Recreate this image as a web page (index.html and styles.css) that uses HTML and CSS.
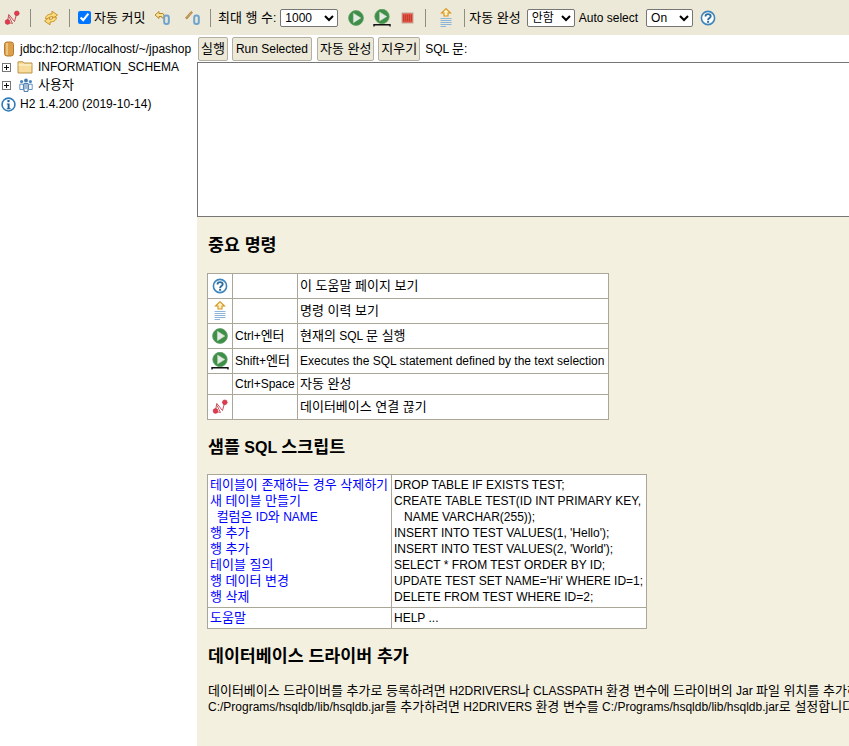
FILE: index.html
```html
<!DOCTYPE html>
<html lang="ko">
<head>
<meta charset="utf-8">
<title>H2 Console</title>
<link rel="stylesheet" href="styles.css">
</head>
<body>
<svg class="defs" width="0" height="0">
  <defs>
    <symbol id="i-disc" viewBox="0 0 16 16">
      <path d="M3.5 11.5 L4.8 4.5 L10.5 11.5 L12.7 3.5" fill="none" stroke="#c23a4a" stroke-width=".9"/>
      <path d="M4 12.5 L8.5 13.5 L5 6.5" fill="none" stroke="#c23a4a" stroke-width=".8"/>
      <circle cx="3.5" cy="12" r="2.4" fill="#e5384c" stroke="#b02a3a" stroke-width=".5"/>
      <circle cx="12.8" cy="3.3" r="2.4" fill="#e5384c" stroke="#b02a3a" stroke-width=".5"/>
    </symbol>
    <symbol id="i-refresh" viewBox="0 0 16 16">
      <path d="M2.5 8.5 C3 5 6 4 9 4 L9 1.2 L14.5 5 L9.5 8.8 L9.5 6.5 C7.5 6.5 6 7.5 5.5 9Z" fill="#fbdc7c" stroke="#c48a20" stroke-width=".9"/>
      <path d="M13.5 7.5 C13 11 10 12 7 12 L7 14.8 L1.5 11 L6.5 7.2 L6.5 9.5 C8.5 9.5 10 8.5 10.5 7Z" fill="#fbdc7c" stroke="#c48a20" stroke-width=".9"/>
    </symbol>
    <symbol id="i-undo" viewBox="0 0 16 16">
      <path d="M1 5 L5 1.5 L5 3.5 L9 3.5 L10 5 L10 8 L8 8 L7.5 6.5 L5 6.5 L5 8.5Z" fill="#f8e29a" stroke="#b8862a" stroke-width="1"/>
      <rect x="10.2" y="5.5" width="4.6" height="8.5" rx="2" fill="none" stroke="#6fa3cf" stroke-width="2"/>
    </symbol>
    <symbol id="i-commit" viewBox="0 0 16 16">
      <path d="M1.5 8 L7 1.5 L8.5 2.5 L3 9Z" fill="#c9a060" stroke="#a87a38" stroke-width=".7"/>
      <rect x="10.2" y="5.5" width="4.6" height="8.5" rx="2" fill="none" stroke="#6fa3cf" stroke-width="2"/>
    </symbol>
    <symbol id="i-play" viewBox="0 0 16 16">
      <circle cx="8" cy="8" r="7.4" fill="#3f8f48" stroke="#5c9e62" stroke-width=".8"/>
      <path d="M5.4 3.2 L12.9 8 L5.4 12.8Z" fill="#e6ece2" stroke="#c9d8c6" stroke-width=".5"/>
    </symbol>
    <symbol id="i-playsel" viewBox="0 0 18 18">
      <circle cx="9" cy="7.5" r="7.2" fill="#3f8f48" stroke="#5c9e62" stroke-width=".8"/>
      <path d="M6.6 3 L13.8 7.5 L6.6 12Z" fill="#e6ece2" stroke="#c9d8c6" stroke-width=".5"/>
      <path d="M1 17.5 L1 15.8 L17 15.8 L17 17.5" fill="none" stroke="#111" stroke-width="1.4"/>
    </symbol>
    <symbol id="i-stop" viewBox="0 0 16 16">
      <rect x="2" y="3" width="11" height="10" fill="#e2503f" stroke="#c2ab9c" stroke-width="1"/>
      <path d="M3 6 H12 M3 8 H12 M3 10 H12" stroke="#a82a20" stroke-width="1.2" stroke-dasharray="1 1"/>
    </symbol>
    <symbol id="i-history" viewBox="0 0 16 20">
      <path d="M8 0.7 L12.5 5 L10 5 L10 8 L6 8 L6 5 L3.5 5Z" fill="#fdf2c6" stroke="#d8921c" stroke-width="1.1"/>
      <path d="M2.5 10.5 H13.5 M2.5 12.5 H13.5 M2.5 14.5 H13.5 M2.5 16.5 H13.5 M2.5 18.5 H8" stroke="#8cb4d8" stroke-width="1"/>
    </symbol>
    <symbol id="i-help" viewBox="0 0 16 16">
      <circle cx="8" cy="8" r="6.6" fill="#fff" stroke="#3d85bb" stroke-width="1.6"/>
      <path d="M5.5 6.4 C5.5 3.4 10.7 3.4 10.7 6.2 C10.7 8 8.1 8 8.1 10" fill="none" stroke="#2c6ea0" stroke-width="1.9"/>
      <rect x="7.1" y="10.8" width="2" height="2" fill="#2c6ea0"/>
    </symbol>
    <symbol id="i-db" viewBox="0 0 12 16">
      <rect x="1.5" y="1" width="9" height="14" rx="2.5" fill="#dca04a" stroke="#b87a2c" stroke-width="1"/>
      <path d="M4 2 V14" stroke="#f3cf94" stroke-width="1.5"/>
    </symbol>
    <symbol id="i-plus" viewBox="0 0 9 9">
      <rect x=".5" y=".5" width="8" height="8" fill="#fff" stroke="#777"/>
      <path d="M2 4.5 H7 M4.5 2 V7" stroke="#111"/>
    </symbol>
    <symbol id="i-folder" viewBox="0 0 16 14">
      <path d="M1 3 L1 1.8 L6 1.8 L7 3 L15 3 L15 13 L1 13Z" fill="#f7dc9c" stroke="#bb9448" stroke-width="1"/>
      <path d="M1.6 5 H14.4" stroke="#fdf0c8" stroke-width="1.4"/>
    </symbol>
    <symbol id="i-users" viewBox="0 0 14 14">
      <circle cx="2.6" cy="3.6" r="1.6" fill="#4c86bd"/>
      <path d="M.8 6.2 H4.4 V11.5 H.8Z" fill="#fff" stroke="#3f78b0" stroke-width=".8"/>
      <circle cx="11.4" cy="3.6" r="1.6" fill="#4c86bd"/>
      <path d="M9.6 6.2 H13.2 V11.5 H9.6Z" fill="#fff" stroke="#3f78b0" stroke-width=".8"/>
      <circle cx="7" cy="2.4" r="1.9" fill="#3f78b0"/>
      <path d="M5 5.4 H9 V13.4 H5Z" fill="#fff" stroke="#2f68a0" stroke-width=".9"/>
      <path d="M7 5.6 V11" stroke="#3f78b0" stroke-width="1"/>
    </symbol>
    <symbol id="i-info" viewBox="0 0 14 14">
      <circle cx="7" cy="7" r="6" fill="#fff" stroke="#2f7ab8" stroke-width="1.5"/>
      <rect x="6" y="2.8" width="2" height="2" fill="#1f5f98"/>
      <path d="M5.4 6 H8 V10.4 H9 V11.4 H5.4 V10.4 H6.2 V7 H5.4Z" fill="#1f5f98"/>
    </symbol>
  </defs>
</svg>

<header class="toolbar">
  <svg class="ic16"><use href="#i-disc"/></svg>
  <span class="sep"></span>
  <svg class="ic16"><use href="#i-refresh"/></svg>
  <span class="sep"></span>
  <label class="check"><input type="checkbox" checked><span class="ko">자동 커밋</span></label>
  <svg class="ic16 undo"><use href="#i-undo"/></svg>
  <svg class="ic16"><use href="#i-commit"/></svg>
  <span class="sep"></span>
  <span class="tlabel"><span class="ko">최대 행 수</span>:</span>
  <select class="sel sel-rows"><option>1000</option></select>
  <svg class="ic16"><use href="#i-play"/></svg>
  <svg class="ic18"><use href="#i-playsel"/></svg>
  <svg class="ic16 stop"><use href="#i-stop"/></svg>
  <span class="sep"></span>
  <svg class="ic-hist"><use href="#i-history"/></svg>
  <span class="sep"></span>
  <span class="tlabel tlabel-auto"><span class="ko">자동 완성</span></span>
  <select class="sel sel-auto"><option>안함</option></select>
  <span class="tlabel tlabel-sel">Auto select</span>
  <select class="sel sel-on"><option>On</option></select>
  <svg class="ic16"><use href="#i-help"/></svg>
</header>

<div class="body-row">
  <nav class="tree">
    <div class="node node-db"><svg class="ic-db"><use href="#i-db"/></svg><span>jdbc:h2:tcp://localhost/~/jpashop</span></div>
    <div class="node node-folder"><svg class="ic-plus"><use href="#i-plus"/></svg><svg class="ic-folder"><use href="#i-folder"/></svg><span>INFORMATION_SCHEMA</span></div>
    <div class="node node-users"><svg class="ic-plus"><use href="#i-plus"/></svg><svg class="ic-users"><use href="#i-users"/></svg><span class="ko">사용자</span></div>
    <div class="node node-info"><svg class="ic-info"><use href="#i-info"/></svg><span>H2 1.4.200 (2019-10-14)</span></div>
  </nav>

  <main class="main">
    <div class="actions">
      <button class="btn"><span class="ko">실행</span></button>
      <button class="btn btn-wide">Run Selected</button>
      <button class="btn"><span class="ko">자동 완성</span></button>
      <button class="btn"><span class="ko">지우기</span></button>
      <span class="sql-label">SQL <span class="ko">문</span>:</span>
    </div>
    <textarea class="sql"></textarea>

    <section class="help">
      <h3 class="h-first"><span class="ko">중요 명령</span></h3>
      <table class="grid cmds">
        <tr class="r25"><td class="c-ic"><svg class="ic16"><use href="#i-help"/></svg></td><td class="c-key"></td><td><span class="ko">이 도움말 페이지 보기</span></td></tr>
        <tr class="r25"><td class="c-ic"><svg class="ic-hist"><use href="#i-history"/></svg></td><td class="c-key"></td><td><span class="ko">명령 이력 보기</span></td></tr>
        <tr class="r25"><td class="c-ic"><svg class="ic16"><use href="#i-play"/></svg></td><td class="c-key">Ctrl+<span class="ko">엔터</span></td><td><span class="ko">현재의</span> SQL <span class="ko">문 실행</span></td></tr>
        <tr class="r25"><td class="c-ic"><svg class="ic18"><use href="#i-playsel"/></svg></td><td class="c-key">Shift+<span class="ko">엔터</span></td><td>Executes the SQL statement defined by the text selection</td></tr>
        <tr class="r21"><td class="c-ic"></td><td class="c-key">Ctrl+Space</td><td><span class="ko">자동 완성</span></td></tr>
        <tr class="r25"><td class="c-ic"><svg class="ic16"><use href="#i-disc"/></svg></td><td class="c-key"></td><td><span class="ko">데이터베이스 연결 끊기</span></td></tr>
      </table>

      <h3><span class="ko">샘플</span> SQL <span class="ko">스크립트</span></h3>
      <table class="grid samples">
        <tr>
          <td class="c-links">
            <a href="#"><span class="ko">테이블이 존재하는 경우 삭제하기</span></a><br>
            <a href="#"><span class="ko">새 테이블 만들기</span></a><br>
            <a href="#">&nbsp;&nbsp;<span class="ko">컬럼은</span> ID<span class="ko">와</span> NAME</a><br>
            <a href="#"><span class="ko">행 추가</span></a><br>
            <a href="#"><span class="ko">행 추가</span></a><br>
            <a href="#"><span class="ko">테이블 질의</span></a><br>
            <a href="#"><span class="ko">행 데이터 변경</span></a><br>
            <a href="#"><span class="ko">행 삭제</span></a>
          </td>
          <td>
            DROP TABLE IF EXISTS TEST;<br>
            CREATE TABLE TEST(ID INT PRIMARY KEY,<br>
            &nbsp;&nbsp;&nbsp;NAME VARCHAR(255));<br>
            INSERT INTO TEST VALUES(1, 'Hello');<br>
            INSERT INTO TEST VALUES(2, 'World');<br>
            SELECT * FROM TEST ORDER BY ID;<br>
            UPDATE TEST SET NAME='Hi' WHERE ID=1;<br>
            DELETE FROM TEST WHERE ID=2;
          </td>
        </tr>
        <tr class="r21">
          <td class="c-links"><a href="#"><span class="ko">도움말</span></a></td>
          <td>HELP ...</td>
        </tr>
      </table>

      <h3><span class="ko">데이터베이스 드라이버 추가</span></h3>
      <p class="note"><span class="ko">데이터베이스 드라이버를 추가로 등록하려면</span> H2DRIVERS<span class="ko">나</span> CLASSPATH <span class="ko">환경 변수에 드라이버의</span> Jar <span class="ko">파일 위치를 추가하세요. 예를 들어 (윈도우)</span><br>C:/Programs/hsqldb/lib/hsqldb.jar<span class="ko">를 추가하려면</span> H2DRIVERS <span class="ko">환경 변수를</span> C:/Programs/hsqldb/lib/hsqldb.jar<span class="ko">로 설정합니다.</span></p>
    </section>
  </main>
</div>
</body>
</html>
```
FILE: styles.css
```css
* { box-sizing: border-box; }
html, body { height: 100%; }
body {
  margin: 0;
  overflow: hidden;
  background: #fff;
  color: #000;
  font: 12px/16px "Liberation Sans", "Noto Sans CJK KR", Arial, sans-serif;
}
.ko { font-size: 1.083em; line-height: 1; }
.defs { display: block; height: 0; }
svg { display: block; flex: none; }
.ic16 { width: 16px; height: 16px; }
.ic18 { width: 18px; height: 18px; }
.ic-hist { width: 16px; height: 20px; }

/* toolbar */
.toolbar {
  display: flex;
  align-items: center;
  height: 35px;
  padding-left: 4px;
  background: #ece9d8;
  white-space: nowrap;
}
.sep { width: 1px; height: 18px; margin: 0 12px 0 10px; background: #8f8c82; flex: none; }
.check { display: flex; align-items: center; width: 71px; margin-left: -4px; margin-right: 5px; }
.check input { width: 13px; height: 13px; margin: 0 3px 0 0; accent-color: #0075ff; }
.undo { margin-right: 14px; }
.toolbar > .ic18 { margin: 0 9px; }
.stop { margin-right: -1px; }
.tlabel { margin-left: -5px; margin-right: 4px; }
.tlabel-auto { margin-left: -8px; }
.tlabel-sel { margin-left: 0; }
.sel {
  height: 18px;
  padding: 0;
  border: 1px solid #767676;
  border-radius: 2px;
  background: #fff;
  font: inherit;
  color: #000;
  flex: none;
}
.sel-rows { width: 58px; margin-right: 10px; }
.sel-auto { width: 48px; margin: 0 0 0 2px; }
.sel-on { width: 47px; margin: 0 7px 0 4px; }
.sel-auto + .tlabel { margin-left: 4px; }

/* panes */
.body-row { display: flex; height: calc(100% - 35px); }
.tree { width: 197px; flex: none; padding-top: 5px; white-space: nowrap; overflow: hidden; }
.node { display: flex; align-items: center; height: 18px; }
.node-info { margin-top: 1px; }
.node-users .ko { margin-bottom: 2px; }
.ic-db { width: 12px; height: 16px; margin: 0 5px 0 3px; }
.ic-plus { width: 9px; height: 9px; margin: 0 6px 0 2px; }
.ic-folder { width: 16px; height: 14px; margin-right: 5px; }
.ic-users { width: 14px; height: 14px; margin: 0 5px 0 2px; }
.ic-info { width: 15px; height: 15px; margin: 0 4px 0 1px; }

.main { flex: 1; min-width: 0; display: flex; flex-direction: column; background: #f4f0e0; overflow: hidden; }
.actions { display: flex; align-items: center; gap: 4px; height: 27px; padding: 1px 0 0 1px; background: #fff; white-space: nowrap; }
.btn {
  height: 24px;
  padding: 0 2px;
  border: 1px solid #b3b0a3;
  border-radius: 2px;
  background: #ece9d8;
  font: inherit;
  color: #000;
}
.btn-wide { padding: 0 3px; margin-right: 1px; }
.sql-label { margin-left: 1px; }
.sql {
  display: block;
  flex: none;
  width: 100%;
  height: 155px;
  margin: 0;
  padding: 2px;
  border: 0;
  border-top: 1px solid #767676;
  border-left: 1px solid #767676;
  border-bottom: 1px solid #767676;
  background: #fff;
  resize: none;
  outline: 0;
}

/* help */
.help { padding: 0 0 0 10px; white-space: nowrap; }
h3 { margin: 0; font-size: 16px; line-height: 20px; font-weight: bold; padding-left: 1px; }
.h-first { padding-top: 19px; height: 56px; }
.grid { border-collapse: collapse; background: #fff; margin-bottom: 16px; }
.grid td { border: 1px solid #aba798; padding: 0 2px; vertical-align: middle; }
.r25 td { height: 25px; }
.r21 td { height: 21px; }
.c-ic svg { margin: 0 auto; }
.cmds td.c-ic { width: 25px; padding: 0; }
.cmds td.c-key { width: 65px; }
.cmds td:last-child { width: 311px; }
.samples { width: 440px; margin-bottom: 0; }
.samples .c-links { width: 184px; }
.samples td { padding: 2px; }
a { color: #0000ff; text-decoration: none; }
.cmds + h3 { height: 38px; padding-top: 2px; }
.samples + h3 { padding-top: 18px; height: 54px; }
.note { margin: 0; padding-left: 1px; line-height: 16px; }
```
